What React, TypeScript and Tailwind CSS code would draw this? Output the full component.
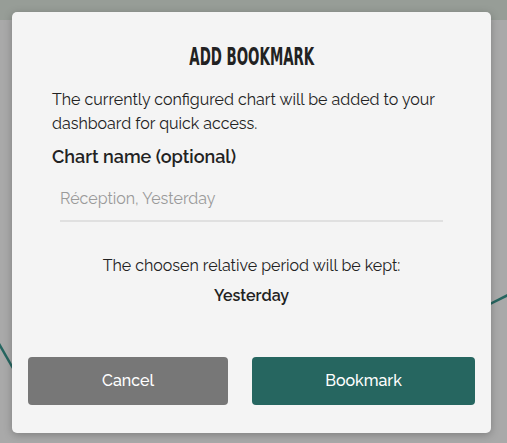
import React from "react";

export default function App() {
  return (
    <div
      className="relative w-[507px] h-[443px] overflow-hidden bg-[#a9a9a9]"
      style={{ fontFamily: "Raleway, 'Open Sans', 'Noto Sans', sans-serif" }}
    >
      <div className="absolute left-0 top-0 w-full h-[20px] bg-[#979d97]" />
      <svg className="absolute inset-0" width="507" height="443" viewBox="0 0 507 443">
        <polyline points="-2,342 14,370" fill="none" stroke="#266660" strokeWidth="2.5" />
        <polyline points="488,305 510,294" fill="none" stroke="#266660" strokeWidth="2.5" />
      </svg>
      <div className="absolute left-[12px] top-[12px] w-[479px] h-[421px] rounded-[5px] bg-[#f4f4f4] shadow-[0_2px_8px_rgba(0,0,0,0.25)] flex flex-col">
        <div className="mt-[32px] flex justify-center h-[26px]">
          <h1
            className="inline-block text-center text-[24px] leading-[26px] font-bold uppercase text-[#222] scale-x-[0.62]"
            style={{ fontFamily: "'DejaVu Sans Condensed', 'Liberation Sans', sans-serif" }}
          >
            Add Bookmark
          </h1>
        </div>
        <p className="mt-[18px] px-[40px] text-[16px] leading-[24px] text-[#222]">
          The currently configured chart will be added to your dashboard for quick access.
        </p>
        <label className="mt-[10px] px-[40px] text-[18px] leading-[22px] font-semibold text-[#222]">
          Chart name (optional)
        </label>
        <div className="mx-[48px] mt-[19px] border-b-2 border-[#e0e0e0] pb-[9px]">
          <span className="text-[16px] leading-[20px] text-[#9a9a9a]">Réception, Yesterday</span>
        </div>
        <p className="mt-[32px] text-center text-[16px] leading-[24px] text-[#222]">
          The choosen relative period will be kept:
        </p>
        <p className="mt-[6px] text-center text-[16px] leading-[24px] font-semibold text-[#222]">
          Yesterday
        </p>
        <div className="mt-auto mb-[28px] mx-[16px] flex gap-[24px]">
          <button className="w-[200px] h-[48px] rounded-[4px] bg-[#777777] text-white text-[16px] font-medium">
            Cancel
          </button>
          <button className="flex-1 h-[48px] rounded-[4px] bg-[#266660] text-white text-[16px] font-medium">
            Bookmark
          </button>
        </div>
      </div>
    </div>
  );
}
